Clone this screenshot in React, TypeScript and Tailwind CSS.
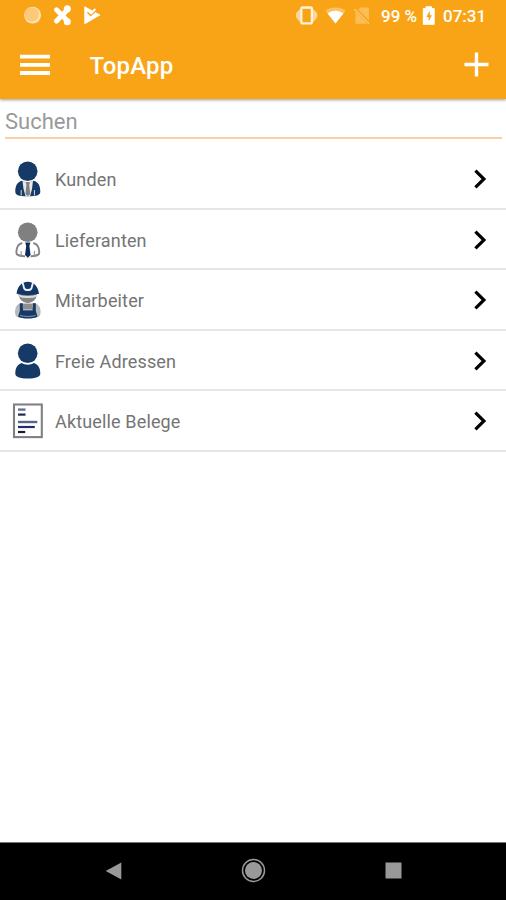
import React from 'react';

interface Entry {
  label: string;
  icon: React.ReactNode;
}

const CustomerIcon = () => (
  <svg width="32" height="36" viewBox="0 0 32 36">
    <circle cx="15.7" cy="10.3" r="9.8" fill="#153a66" />
    <path d="M10 19.8 C5 21 3.3 25 3.3 30.5 C3.3 34 6 35.3 15.8 35.3 C25.6 35.3 28.3 34 28.3 30.5 C28.3 25 26.5 21 21.6 19.8 L15.8 22 Z" fill="#153a66" />
    <path d="M10.5 19.8 L15.8 22 L21 19.8 L20 28 L18 35.3 H13.5 L11.5 28 Z" fill="#e8e8e8" />
    <path d="M13.6 21 H18 L17.2 23.5 L18.2 33 L15.8 35.3 L13.4 33 L14.4 23.5 Z" fill="#808080" />
    <path d="M9.2 29 V34.5 M22.4 29 V34.5" stroke="#d5dae2" strokeWidth="1" />
  </svg>
);

const SupplierIcon = () => (
  <svg width="32" height="36" viewBox="0 0 32 36">
    <circle cx="15.7" cy="10.3" r="9.8" fill="#808080" />
    <path d="M10.3 21 C6 22 4.3 25.5 4.3 30.5 C4.3 33 6.5 34.2 15.8 34.2 C25.1 34.2 27.3 33 27.3 30.5 C27.3 25.5 25.5 22 21.3 21" fill="#fff" stroke="#858585" strokeWidth="1.9" />
    <path d="M9.2 29 V33.5 M22.4 29 V33.5" stroke="#a0a0a0" strokeWidth="1.2" />
    <path d="M10.8 20.5 L13.2 35.7 H18.4 L20.8 20.5 Z" fill="#fff" />
    <path d="M13.2 20.5 H18.4 L17.4 24 L18.6 33 L15.8 35.7 L13 33 L14.2 24 Z" fill="#0d2c5c" />
  </svg>
);

const WorkerIcon = () => (
  <svg width="32" height="38" viewBox="0 0 32 38">
    <path d="M6.5 13 H25 C24.5 18.5 20.5 22 15.8 22 C11 22 7 18.5 6.5 13 Z" fill="#858585" />
    <path d="M6.5 14.3 C11 16.6 20.5 16.6 25 14.3" fill="none" stroke="#ddd" strokeWidth="2" />
    <path d="M4.6 12.8 C5.2 7 8 3 12 1.5 C14 0.4 17.5 0.4 19.5 1.5 C23.5 3 26.3 7 27 12.8 C20 14.6 11.5 14.6 4.6 12.8 Z" fill="#123665" />
    <path d="M10.7 2 L12.2 7.4 C13 9.6 18.6 9.6 19.4 7.4 L20.9 2" fill="none" stroke="#edf0f4" strokeWidth="1.9" />
    <path d="M8.5 22.2 C4.5 23.2 3 27 3 31 C3 34 4 36 7 36.6 H24.5 C27.5 36 28.6 34 28.6 31 C28.6 27 27 23.2 23 22.2 Z" fill="#b8babd" />
    <path d="M7.8 22.3 H10.8 V27 H20.8 V22.3 H23.8 V30 L25.5 35.5 C22 38.3 9.6 38.3 6.1 35.5 L7.8 30 Z" fill="#153a66" />
    <path d="M11 23 H20.6 V28.6 H11 Z" fill="#8f8f8f" />
    <path d="M11 28.8 H20.6" stroke="#d3d8df" strokeWidth="1" />
    <path d="M8 34.5 C12 35.8 19.5 35.8 23.5 34.5" fill="none" stroke="#8396ae" strokeWidth="1" />
  </svg>
);

const PersonIcon = () => (
  <svg width="32" height="36" viewBox="0 0 32 36">
    <circle cx="15.7" cy="10.3" r="9.8" fill="#153a66" />
    <path d="M9.8 20 C13 22.2 18.6 22.2 21.8 20 C26.6 21.5 28.3 25.5 28.3 30.5 C28.3 34 24 35.5 15.8 35.5 C7.6 35.5 3.3 34 3.3 30.5 C3.3 25.5 5 21.5 9.8 20 Z" fill="#153a66" />
  </svg>
);

const DocumentIcon = () => (
  <svg width="32" height="36" viewBox="0 0 32 36">
    <rect x="2" y="1.5" width="27.8" height="32.6" fill="#fff" stroke="#808080" strokeWidth="2.1" />
    <path d="M6 6.6 H13.5" stroke="#64758f" strokeWidth="2.4" />
    <path d="M6 11.6 H13.5" stroke="#1e2856" strokeWidth="2.2" />
    <path d="M6 19 H25.3" stroke="#53688b" strokeWidth="2.4" />
    <path d="M6 24 H22.8" stroke="#282b70" strokeWidth="2.2" />
    <path d="M6 29 H13.2" stroke="#151b3c" strokeWidth="2.2" />
  </svg>
);

const entries: Entry[] = [
  { label: 'Kunden', icon: <CustomerIcon /> },
  { label: 'Lieferanten', icon: <SupplierIcon /> },
  { label: 'Mitarbeiter', icon: <WorkerIcon /> },
  { label: 'Freie Adressen', icon: <PersonIcon /> },
  { label: 'Aktuelle Belege', icon: <DocumentIcon /> },
];

const StatusBar = () => (
  <div className="flex h-8 items-center justify-between pl-6 pr-[19px] text-white">
    <svg width="80" height="24" viewBox="24 4 80 24">
      <circle cx="32.6" cy="15.2" r="8.4" fill="#fde3b4" />
      <circle cx="31.8" cy="14.4" r="7.1" fill="#fbc977" />
      <path d="M56.5 9.8 L67.5 21 M67.5 9.8 L56.5 21" stroke="#fff" strokeWidth="5" strokeLinecap="round" />
      <circle cx="67.3" cy="8.8" r="3.5" fill="#fff" />
      <circle cx="67.3" cy="21.8" r="3.5" fill="#fff" />
      <path d="M84.7 6.8 L100 15 L84.7 23.8 Z" fill="#fff" stroke="#fff" strokeWidth=".8" strokeLinejoin="round" />
      <path d="M87.5 12.2 L90.6 15.4 L97.5 9.2" fill="none" stroke="#f9a417" strokeWidth="1.5" />
      <path d="M90 12 L91.2 13.2 L95.4 9" fill="none" stroke="#fff" strokeWidth="2" />
    </svg>
    <div className="flex items-center">
      <svg width="80" height="24" viewBox="295 4 80 24">
        <ellipse cx="306.6" cy="15.4" rx="10.8" ry="7.8" fill="#fcd596" />
        <rect x="301.3" y="7.5" width="10.6" height="15.8" rx="1.4" fill="#f9a417" stroke="#fff3dc" strokeWidth="2.3" />
        <path d="M325.5 10.8 C331 6.4 340 6.4 345.5 10.8 L335.5 23.5 Z" fill="#fbc162" />
        <path d="M327.6 13.4 C332 10 339 10 343.4 13.4 L335.5 23.5 Z" fill="#fff" />
        <path d="M360.5 7.5 H369 V20.5 L358.2 9.8 Z M355.5 11.5 L367.5 23.8 H355.5 Z" fill="#fbbd58" />
        <path d="M354.5 9 L369 23.8" stroke="#fbc570" strokeWidth="1.3" />
      </svg>
      <span className="ml-[6px] w-[37px] whitespace-nowrap text-[17px] leading-6 font-medium">99 %</span>
      <svg className="ml-1" width="14" height="24" viewBox="422 4 14 24">
        <path d="M426 6.8 H431.5 V8.6 H434.2 V24.3 H423.3 V8.6 H426 Z" fill="#fff" stroke="#fff" strokeWidth="1" strokeLinejoin="round" />
        <path d="M429.8 10.8 L426.3 17 H428.6 V21.5 L431.9 15.2 H429.8 Z" fill="#f9a417" />
      </svg>
      <span className="ml-[7px] w-11 whitespace-nowrap text-[17px] leading-6 font-medium">07:31</span>
    </div>
  </div>
);

const Header = () => (
  <div className="flex h-[66px] items-center pl-5 pr-[17px] text-white">
    <svg width="31" height="22" viewBox="0 0 31 22">
      <path d="M0 2.6 H30 M0 10.8 H30 M0 19 H30" stroke="#fff" strokeWidth="3.8" />
    </svg>
    <h1 className="ml-[38.5px] pt-px text-2xl font-medium tracking-[0.2px]">TopApp</h1>
    <svg className="mb-[2px] ml-auto" width="25" height="25" viewBox="0 0 25 25">
      <path d="M12.5 .5 V24.5 M.5 12.5 H24.5" stroke="#fff" strokeWidth="3.4" />
    </svg>
  </div>
);

const App: React.FC = () => {
  return (
    <div className="flex h-[900px] w-full flex-col bg-white font-['Roboto',sans-serif]">
      <header className="h-[98.5px] shrink-0 bg-[#f9a417] shadow-[0_1px_3px_rgba(0,0,0,0.4)]">
        <StatusBar />
        <Header />
      </header>

      <div className="ml-[5px] mr-1 mt-[5px] h-[35px] border-b-2 border-[#fdcfa5]">
        <input
          type="text"
          placeholder="Suchen"
          className="block h-[35px] w-full text-[22px] text-gray-700 outline-none placeholder:text-[#999]"
        />
      </div>

      <ul className="mt-[10.5px] flex-1">
        {entries.map((entry) => (
          <li key={entry.label} className="flex h-[60.5px] items-center border-b-2 border-[#e6e6e6] pl-3 pr-[19px] pt-[2px]">
            {entry.icon}
            <span className="ml-[11px] pt-px text-[18px] tracking-[0.15px] text-[#747474]">{entry.label}</span>
            <svg className="ml-auto" width="14" height="20" viewBox="0 0 14 20">
              <path d="M2.4 1.7 L10.9 10 L2.4 18.3" fill="none" stroke="#000" strokeWidth="3.2" />
            </svg>
          </li>
        ))}
      </ul>

      <nav className="flex h-[58.5px] shrink-0 items-center justify-between border-t border-[#777] bg-black pb-px pl-[105px] pr-[104px]">
        <svg width="17" height="18" viewBox="0 0 17 18">
          <path d="M.7 9 L16.3 .5 V17.5 Z" fill="#999" />
        </svg>
        <svg width="25" height="25" viewBox="0 0 25 25">
          <circle cx="12.5" cy="12.5" r="11" fill="none" stroke="#999" strokeWidth="1.5" />
          <circle cx="12.5" cy="12.5" r="8.5" fill="#999" />
        </svg>
        <svg width="17" height="17" viewBox="0 0 17 17">
          <rect x=".5" y=".5" width="16" height="16" fill="#999" />
        </svg>
      </nav>
    </div>
  );
};

export default App;
